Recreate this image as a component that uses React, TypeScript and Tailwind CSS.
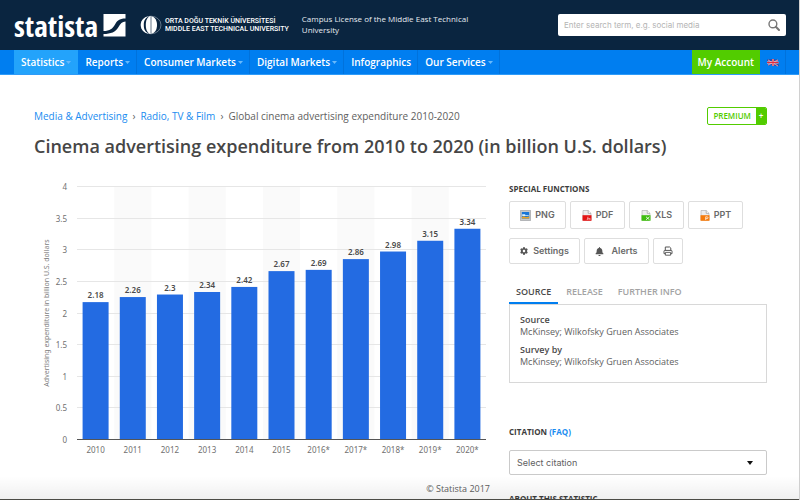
import { useState } from "react";
import { FaBell, FaCog } from "react-icons/fa";

interface NavItem {
  label: string;
  href: string;
  hasMenu: boolean;
}

interface DataPoint {
  year: string;
  value: number;
}

interface FileIconProps {
  color: string;
  children: React.ReactNode;
}

const navItems: NavItem[] = [
  { label: "Statistics", href: "#statistics", hasMenu: true },
  { label: "Reports", href: "#reports", hasMenu: true },
  { label: "Consumer Markets", href: "#consumer", hasMenu: true },
  { label: "Digital Markets", href: "#digital", hasMenu: true },
  { label: "Infographics", href: "#infographics", hasMenu: false },
  { label: "Our Services", href: "#services", hasMenu: true },
];

const data: DataPoint[] = [
  { year: "2010", value: 2.18 },
  { year: "2011", value: 2.26 },
  { year: "2012", value: 2.3 },
  { year: "2013", value: 2.34 },
  { year: "2014", value: 2.42 },
  { year: "2015", value: 2.67 },
  { year: "2016*", value: 2.69 },
  { year: "2017*", value: 2.86 },
  { year: "2018*", value: 2.98 },
  { year: "2019*", value: 3.15 },
  { year: "2020*", value: 3.34 },
];

const ticks = [0, 0.5, 1, 1.5, 2, 2.5, 3, 3.5, 4];
const tabs = ["Source", "Release", "Further info"];

// Plot area inside the chart's viewBox
const PLOT = { left: 43, right: 452, top: 7, bottom: 260 };

function Chart() {
  const step = (PLOT.right - PLOT.left) / data.length;
  const y = (v: number) => PLOT.bottom - (v / 4) * (PLOT.bottom - PLOT.top);

  return (
    <svg
      viewBox="0 0 456 280"
      className="block w-full font-['Noto_Sans','Open_Sans',sans-serif]"
      role="img"
      aria-label="Cinema advertising expenditure by year"
    >
      {data.map((d, i) =>
        i % 2 === 1 ? (
          <rect
            key={d.year}
            x={PLOT.left + i * step}
            y={PLOT.top}
            width={step}
            height={PLOT.bottom - PLOT.top}
            fill="#fafafa"
          />
        ) : null
      )}
      {ticks.map((t) => (
        <g key={t}>
          <line
            x1={PLOT.left}
            x2={PLOT.right}
            y1={Math.round(y(t)) - 0.5}
            y2={Math.round(y(t)) - 0.5}
            stroke="#e6e6e6"
          />
          <text x="33" y={y(t) + 3} textAnchor="end" fontSize="8" fill="#707070">
            {t}
          </text>
        </g>
      ))}
      {data.map((d, i) => {
        const center = PLOT.left + (i + 0.5) * step;
        return (
          <g key={d.year}>
            <rect x={center - 13} y={y(d.value)} width="26" height={PLOT.bottom - y(d.value)} fill="#236be2" />
            <text x={center} y={y(d.value) - 4} textAnchor="middle" fontSize="8" fontWeight="600" fill="#4a4a4a">
              {d.value}
            </text>
            <text x={center} y="273" textAnchor="middle" fontSize="8" fill="#707070">
              {d.year}
            </text>
          </g>
        );
      })}
      <line x1={PLOT.left} x2={PLOT.right} y1="259.5" y2="259.5" stroke="#555" />
      <text transform="translate(15 133) rotate(-90)" textAnchor="middle" fontSize="7" fill="#808080">
        Advertising expenditure in billion U.S. dollars
      </text>
    </svg>
  );
}

function FileIcon({ color, children }: FileIconProps) {
  return (
    <svg viewBox="0 0 10 11" className="h-[11px] w-[10px]" aria-hidden="true">
      <path d="M1 .5h5.2L9 3.3V10H1z" fill="#ededed" stroke="#a8a8a8" strokeWidth=".6" />
      <path d="M6.2.5v2.8H9" fill="#fff" stroke="#8a8a8a" strokeWidth=".6" />
      <path d="M.5 5.2h9v5.6h-9z" fill={color} />
      {children}
    </svg>
  );
}

function ImageIcon() {
  return (
    <svg viewBox="0 0 11 11" className="size-[11px]" aria-hidden="true">
      <rect x=".3" y=".3" width="10.4" height="10.4" rx=".8" fill="#c6c9cc" stroke="#8e9296" strokeWidth=".6" />
      <rect x="1.8" y="2" width="7.4" height="6.6" fill="#1876d8" />
      <path d="M2.2 4.2h3v1h3.5v.9H2.2z" fill="#d9f0ff" />
      <path d="M1.8 8.6V7l2.1-.8 2 .9 3.3-.5v2z" fill="#eba325" />
    </svg>
  );
}

function PrintIcon() {
  return (
    <svg viewBox="0 0 10 10" className="size-[10px]" fill="none" stroke="#555" aria-hidden="true">
      <path d="M2.3 4.3V1h4.4l1.1 1.1v2.2M2.3 7.7H1V5.2q0-.8.8-.8h6.4q.8 0 .8.8v2.5H7.8" strokeWidth="1" />
      <path d="M2.4 6.4h5.2v2.8H2.4z" strokeWidth=".9" />
    </svg>
  );
}

function StatistaMark() {
  return (
    <svg viewBox="0 0 23 23" className="h-[23px] w-[23px]" aria-hidden="true">
      <path d="M.5 0H22.5V4.500C16 4.500 14 7 12 10.500C9.500 14.800 7 17 .5 17z" fill="#fff" />
      <path d="M.5 20C8 20 12.500 18 15.500 13C17.500 9.700 19 7.700 22.500 7.500V22.500H.5z" fill="#fff" />
    </svg>
  );
}

function UniversityMark() {
  return (
    <svg viewBox="0 0 22 20" className="h-5 w-[22px]" aria-hidden="true">
      <ellipse cx="11" cy="10" rx="10" ry="8.800" fill="none" stroke="#9eabb8" strokeWidth=".6" />
      <path d="M8.500 1.300C3.800 2 .8 5.500.8 10s3 8 7.700 8.700C4.800 16.500 3.800 14 3.800 10s1-6.500 4.700-8.700z" fill="#fff" />
      <path d="M10.700 1v18C7.300 18.500 5.800 14.500 5.800 10S7.300 1.500 10.700 1z" fill="#fff" />
      <path d="M11.300 1.200c3.900.8 5.700 4.600 5.700 8.800s-1.800 8-5.700 8.800z" fill="#fff" />
    </svg>
  );
}

function UkFlag() {
  return (
    <svg viewBox="0 0 12 9" className="h-[9px] w-3" aria-hidden="true">
      <path d="M0 1.500l5-.5 6 .8L12 8H9L5 7 1 7.500z" fill="#2b4ea8" />
      <path d="M1 2l10 6M11 2L1 7" stroke="#e8d5e4" strokeWidth="1" />
      <path d="M1 2l10 6M11 2L1 7" stroke="#e02b3c" strokeWidth=".5" />
      <path d="M6 1v7M0 4.500h11.500" stroke="#f0c9d2" strokeWidth="1.800" />
      <path d="M6 1v7M0 4.500h11.500" stroke="#e02b3c" strokeWidth="1.100" />
    </svg>
  );
}

function Header() {
  return (
    <header className="flex h-[50px] shrink-0 items-start bg-[#0a2540] pr-[13px] pl-[14px] text-white">
      <a href="#home" className="mt-[14px] flex items-center gap-[5px]" aria-label="Statista home">
        <span className="font-['Liberation_Sans_Narrow','Open_Sans_Condensed','Liberation_Sans',sans-serif] text-[29px] leading-[23px] font-bold">
          statista
        </span>
        <StatistaMark />
      </a>
      <div className="mt-[15px] ml-[14px] flex items-center gap-[3px]">
        <UniversityMark />
        <p className="font-[Roboto,sans-serif] text-[7px] leading-[8px] font-medium whitespace-nowrap">
          ORTA DOĞU TEKNİK ÜNİVERSİTESİ
          <br />
          MIDDLE EAST TECHNICAL UNIVERSITY
        </p>
      </div>
      <p className="mt-[13px] ml-[13px] w-[180px] text-[8px] leading-[11px] text-[#e6ebf0]">
        Campus License of the Middle East Technical University
      </p>
      <form className="mt-[14px] ml-auto flex h-[22px] w-[228px] items-center rounded-xs bg-white px-1.5">
        <input
          type="search"
          aria-label="Search"
          placeholder="Enter search term, e.g. social media"
          className="min-w-0 flex-1 bg-transparent font-[Inter,sans-serif] text-[8px] text-gray-700 outline-none placeholder:text-[#b4b4b4]"
        />
        <button type="submit" aria-label="Search">
          <svg viewBox="0 0 12 12" className="size-3" fill="none" stroke="#777" aria-hidden="true">
            <circle cx="4.900" cy="4.900" r="3.900" strokeWidth="1.400" />
            <path d="M7.800 7.800L11 11" strokeWidth="2" strokeLinecap="round" />
          </svg>
        </button>
      </form>
    </header>
  );
}

function Nav() {
  return (
    <nav className="flex h-[25px] shrink-0 border-b border-[#2e9bf8] bg-[#007ef0] pr-[13px] pl-[14px] text-[10px] font-semibold text-white">
      {navItems.map((item, i) => (
        <a
          key={item.label}
          href={item.href}
          className={`flex items-center gap-[2px] whitespace-nowrap ${
            i === 0 ? "bg-[#23a3fb] px-[7px]" : "border-r border-[#0072dc] pr-1.5 pl-[7px]"
          }`}
        >
          {item.label}
          {item.hasMenu && (
            <svg viewBox="0 0 5 3" className="h-[3px] w-[5px]" aria-hidden="true">
              <path d="M0 0h5L2.500 3z" fill="#69b9fb" />
            </svg>
          )}
        </a>
      ))}
      <a href="#account" className="ml-auto flex items-center bg-[#52cc00] px-1.5 whitespace-nowrap">
        My Account
      </a>
      <button type="button" aria-label="Language: English" className="flex w-[26px] items-center justify-center border-r border-[#0072dc]">
        <UkFlag />
      </button>
    </nav>
  );
}

function Sidebar() {
  const [activeTab, setActiveTab] = useState("Source");

  return (
    <aside className="pt-[3px]">
      <h2 className="text-[8px] leading-[12px] font-bold text-[#3c3c3c] uppercase">Special functions</h2>
      <div className="mt-[6px] flex gap-1 font-[Inter,sans-serif] text-[9px] font-semibold text-[#6a6a6a]">
        <button type="button" className="flex h-7 w-[57px] items-center justify-center gap-1 rounded-xs border border-[#dedede]">
          <ImageIcon />
          PNG
        </button>
        <button type="button" className="flex h-7 w-[55px] items-center justify-center gap-1 rounded-xs border border-[#dedede]">
          <FileIcon color="#e31414">
            <path d="M5 9.500q1-1.500 1-2.800M6 7.800q.6 1.200 2.500 1.300M5 9.500q1.200-.8 3.500-.5" fill="none" stroke="#fff" strokeWidth=".5" />
          </FileIcon>
          PDF
        </button>
        <button type="button" className="flex h-7 w-[55px] items-center justify-center gap-1 rounded-xs border border-[#dedede]">
          <FileIcon color="#3fbd10">
            <path d="M5 6.800l3.500 3M8.500 6.800L5 9.800" fill="none" stroke="#fff" strokeWidth=".8" />
          </FileIcon>
          XLS
        </button>
        <button type="button" className="flex h-7 w-[55px] items-center justify-center gap-1 rounded-xs border border-[#dedede]">
          <FileIcon color="#f57a0a">
            <path d="M5.700 10V6.800h1.400q.9 0 .9.900t-.9.900H5.700" fill="none" stroke="#fff" strokeWidth=".7" />
          </FileIcon>
          PPT
        </button>
      </div>
      <div className="mt-[9px] flex gap-1 font-[Inter,sans-serif] text-[9px] font-semibold text-[#6a6a6a]">
        <button type="button" className="flex h-[26px] w-[71px] items-center justify-center gap-[5px] rounded-xs border border-[#dedede]">
          <FaCog className="size-2 text-[#555]" />
          Settings
        </button>
        <button type="button" className="flex h-[26px] w-[65px] items-center justify-center gap-[7px] rounded-xs border border-[#dedede]">
          <FaBell className="size-[9px] text-[#555]" />
          Alerts
        </button>
        <button type="button" aria-label="Print" className="flex h-[26px] w-[30px] items-center justify-center rounded-xs border border-[#dedede]">
          <PrintIcon />
        </button>
      </div>

      <div role="tablist" className="mt-[21px] flex gap-px text-[9px] font-semibold">
        {tabs.map((tab) => (
          <button
            key={tab}
            type="button"
            role="tab"
            aria-selected={activeTab === tab}
            onClick={() => setActiveTab(tab)}
            className={`h-[19px] border-b-2 px-[7px] pb-[3px] uppercase ${
              activeTab === tab ? "border-[#007ef0] text-[#4a4a4a]" : "border-transparent text-[#a3a3a3]"
            }`}
          >
            {tab}
          </button>
        ))}
      </div>
      <dl className="h-[79px] border border-[#d8d8d8] px-[10px] pt-[9px] text-[9px] leading-[12px] text-[#606060]">
        <dt className="font-semibold text-[#4a4a4a]">Source</dt>
        <dd className="mb-1.5">McKinsey; Wilkofsky Gruen Associates</dd>
        <dt className="font-semibold text-[#4a4a4a]">Survey by</dt>
        <dd>McKinsey; Wilkofsky Gruen Associates</dd>
      </dl>

      <h2 className="mt-[43px] text-[8px] leading-[12px] font-bold text-[#3c3c3c]">
        <label htmlFor="citation">CITATION</label>{" "}
        <a href="#faq" className="text-[#1a8cf0]">
          (FAQ)
        </a>
      </h2>
      <div className="relative mt-3">
        <select
          id="citation"
          className="block h-[25px] w-full appearance-none rounded-xs border border-[#cacaca] bg-white px-[7px] font-[Inter,sans-serif] text-[9px] text-[#606060]"
        >
          <option>Select citation</option>
        </select>
        <svg viewBox="0 0 6 4" className="pointer-events-none absolute top-[11px] right-[14px] h-1 w-1.5" aria-hidden="true">
          <path d="M0 0h6L3 4z" fill="#111" />
        </svg>
      </div>
      <h2 className="mt-[18px] text-[8px] leading-[12px] font-bold text-[#3c3c3c] uppercase">About this statistic</h2>
    </aside>
  );
}

export default function App() {
  return (
    <div className="relative flex h-screen flex-col overflow-hidden border-r border-[#d0d0d0] bg-white font-['Open_Sans','Noto_Sans',sans-serif]">
      <Header />
      <Nav />
      <main className="pr-8 pl-[34px]">
        <div className="mt-[32px] flex items-center justify-between">
          <div className="flex gap-[5px] text-[10px] leading-[16px] text-[#606060]">
            <a href="#media" className="text-[#1a8cf0]">
              Media &amp; Advertising
            </a>
            <span>›</span>
            <a href="#radio" className="text-[#1a8cf0]">
              Radio, TV &amp; Film
            </a>
            <span>›</span>
            <span>Global cinema advertising expenditure 2010-2020</span>
          </div>
          <div className="flex h-[18px] items-stretch overflow-hidden rounded-xs border border-[#52cc00] text-[8px] font-semibold">
            <span className="flex items-center px-[5px] text-[#52cc00]">PREMIUM</span>
            <span className="flex w-[10px] items-center justify-center bg-[#52cc00] text-white">+</span>
          </div>
        </div>
        <h1 className="mt-2 text-[18px] leading-[26px] font-semibold text-[#464646]">
          Cinema advertising expenditure from 2010 to 2020 (in billion U.S. dollars)
        </h1>

        <div className="mt-[21px] grid grid-cols-[minmax(0,1fr)_258px] gap-[19px]">
          <section>
            <Chart />
            <p className="mt-[23px] text-right text-[9px] leading-[12px] text-[#606060]">© Statista 2017</p>
          </section>
          <Sidebar />
        </div>
      </main>
      {/* Fade over the cut-off content at the window's bottom edge */}
      <div className="pointer-events-none absolute inset-x-0 bottom-0 h-6 border-b border-[#4c4c46] bg-linear-to-b from-transparent to-black/6" />
    </div>
  );
}
